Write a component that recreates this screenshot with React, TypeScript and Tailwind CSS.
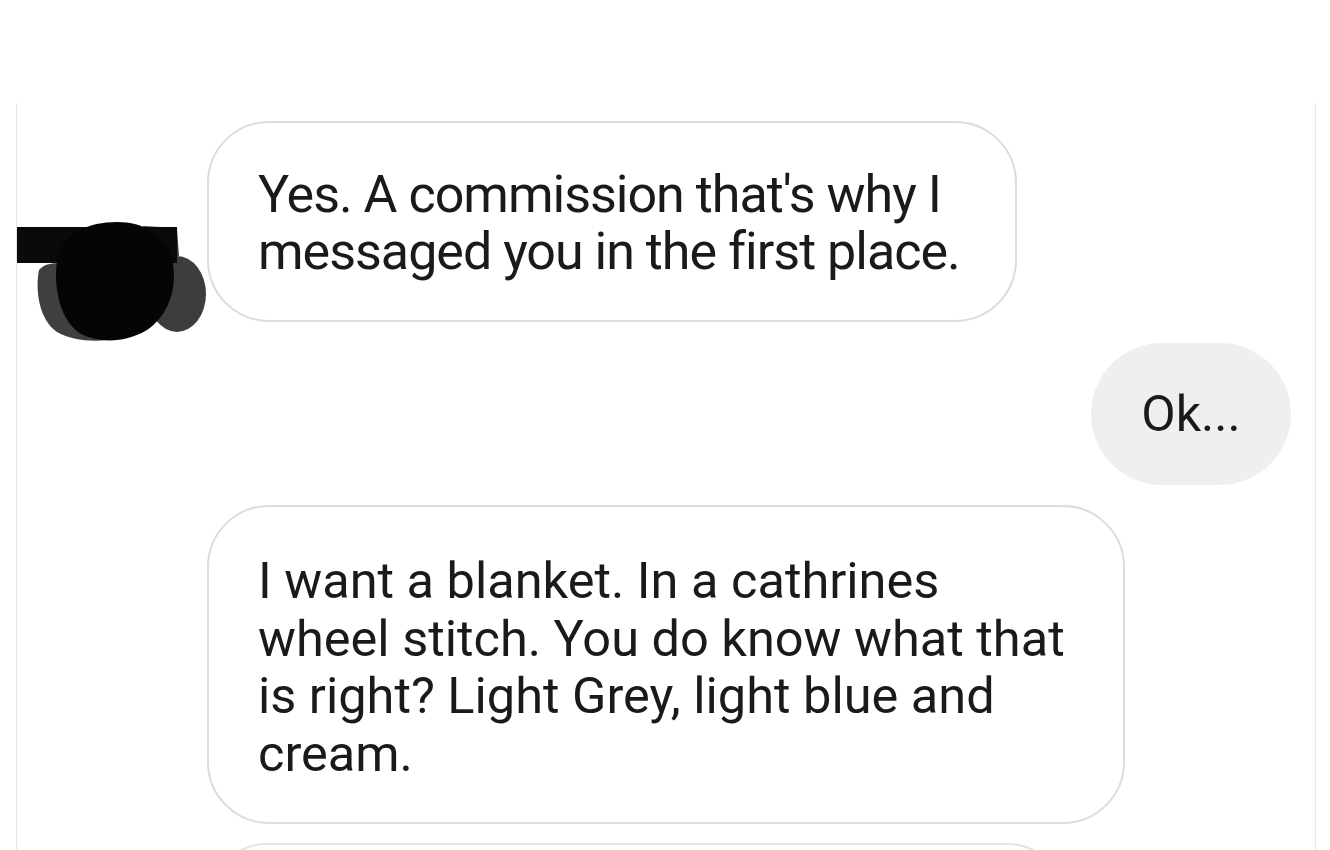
import React from "react";

const font = { fontFamily: "Roboto, 'Noto Sans', Arial, sans-serif" };

function Avatar() {
  // scribbled-out profile picture
  return (
    <svg width="190" height="126" viewBox="0 0 190 126" className="absolute left-0 top-[99px]">
      <ellipse cx="160" cy="74" rx="29" ry="38" fill="#3d3d3d" />
      <path d="M126 6 L160 8 L162 36 L128 34 Z" fill="#3a3a3a" />
      <path d="M22 50 C30 40 50 42 60 50 L120 110 C100 124 60 124 40 112 C22 100 18 70 22 50 Z" fill="#3f3f3f" />
      <rect x="0" y="7" width="160" height="36" fill="#0a0a0a" />
      <path
        d="M40 40 C44 14 70 2 100 2 C130 2 152 18 156 44 C160 72 150 96 130 110 C110 122 84 124 64 114 C44 102 36 70 40 40 Z"
        fill="#050505"
      />
    </svg>
  );
}

export default function App() {
  return (
    <div className="h-[850px] w-[1330px] overflow-hidden bg-white" style={font}>
      <div className="ml-[16px] mt-[103px] h-[747px] w-[1300px] border-x border-[#e6e6e6]">
        <div className="flex flex-col pt-[18px]">
          <div className="relative pl-[190px]">
            <Avatar />
            <div className="w-[810px] rounded-[62px] border-2 border-[#dcdcdc] px-[49px] pt-[43px] pb-[40px] text-[52px] leading-[57px] tracking-[-1px] text-[#1a1a1a]">
              Yes. A commission that's why I
              <br />
              messaged you in the first place.
            </div>
          </div>

          <div className="mt-[21px] flex justify-end pr-[24px]">
            <div className="flex h-[142px] w-[200px] items-center justify-center rounded-full bg-[#efefef] text-[50px] text-[#1a1a1a]">
              Ok...
            </div>
          </div>

          <div className="mt-[20px] pl-[190px]">
            <div className="w-[918px] rounded-[62px] border-2 border-[#dcdcdc] px-[49px] pt-[45px] pb-[40px] text-[50.5px] leading-[57.5px] text-[#1a1a1a]">
              I want a blanket. In a cathrines
              <br />
              wheel stitch. You do know what that
              <br />
              is right? Light Grey, light blue and
              <br />
              cream.
            </div>
          </div>

          <div className="mt-[19px] pl-[190px]">
            <div className="h-[120px] w-[860px] rounded-[62px] border-2 border-[#e4e4e4]" />
          </div>
        </div>
      </div>
    </div>
  );
}
